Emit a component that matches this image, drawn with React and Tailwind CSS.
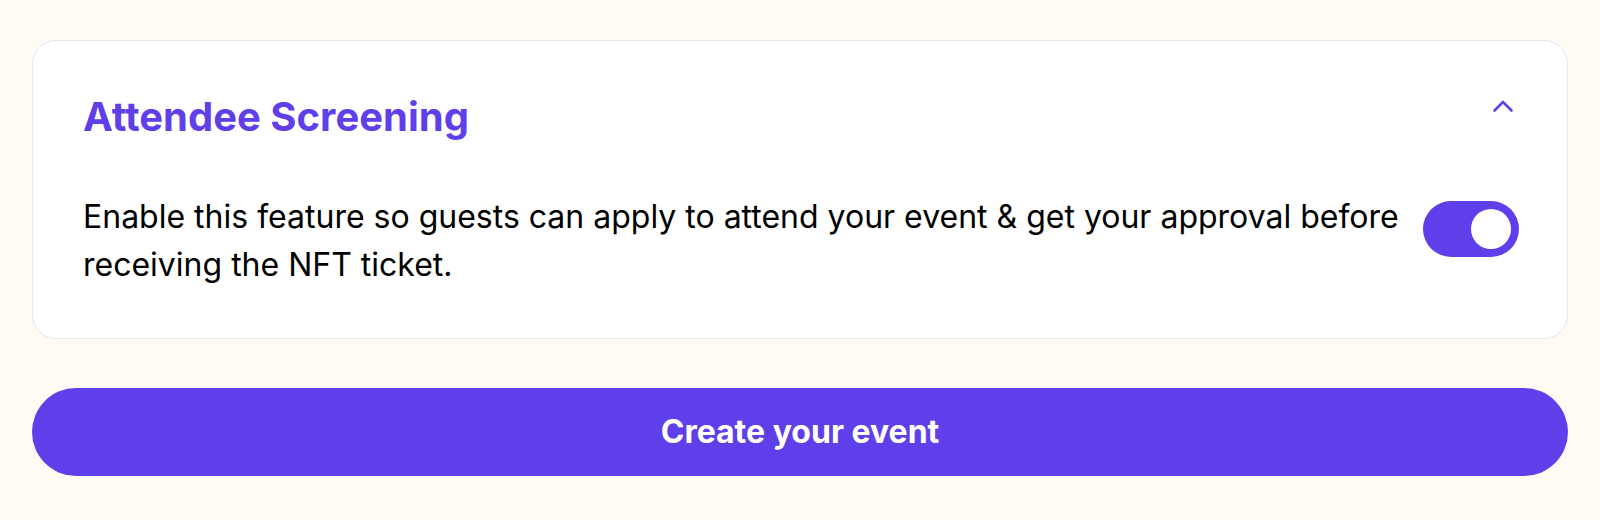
export default function App() {
  return (
    <div className="w-full h-[520px] bg-[#fffaf3] px-8 pt-10 flex flex-col" style={{ fontFamily: 'Inter, "Noto Sans", sans-serif' }}>
      <div className="rounded-[24px] border border-[#e5e7eb] bg-white pl-[50px] pr-12 pt-12 pb-[49px]">
        <div className="flex items-start justify-between">
          <h2 className="text-[40px] leading-[56px] font-bold text-[#5f3fe9]">Attendee Screening</h2>
          <svg className="mt-[11px] mr-[6px]" width="20" height="12" viewBox="0 0 20 12" fill="none" stroke="#5f3fe9" strokeWidth="2.6" strokeLinecap="round" strokeLinejoin="round">
            <path d="M1.5 10.5L10 2l8.5 8.5" />
          </svg>
        </div>
        <div className="mt-12 flex items-start justify-between gap-6">
          <p className="flex-1 text-[32px] leading-[48px] text-black">
            Enable this feature so guests can apply to attend your event &amp; get your approval before receiving the NFT ticket.
          </p>
          <div className="mt-2 w-[96px] h-[56px] rounded-full bg-[#5f3fe9] p-2 flex justify-end shrink-0">
            <div className="w-10 h-10 rounded-full bg-white" />
          </div>
        </div>
      </div>
      <button className="mt-[49px] h-[88px] w-full rounded-full bg-[#5f3fe9] text-white font-bold text-[32px]">
        Create your event
      </button>
    </div>
  );
}
